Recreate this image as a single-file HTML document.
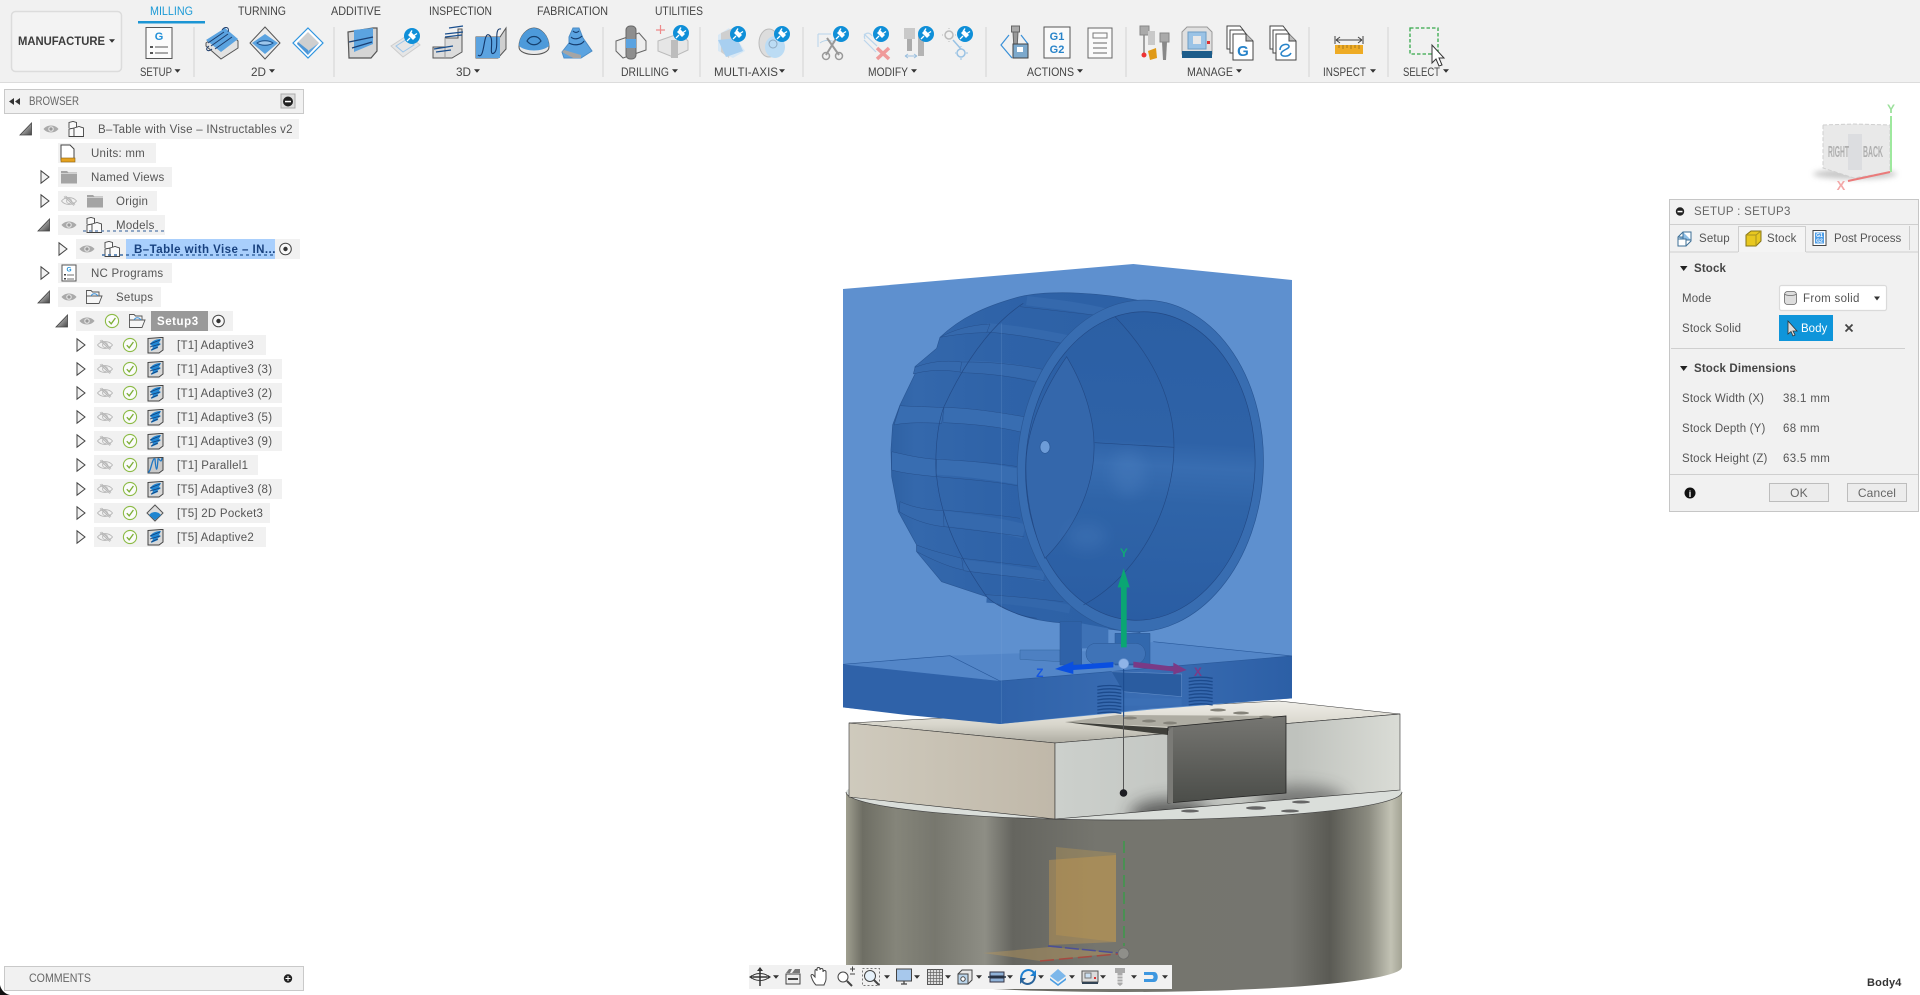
<!DOCTYPE html>
<html lang="en"><head><meta charset="utf-8"><title>Manufacture</title>
<style>
html,body{margin:0;padding:0;background:#fff;width:1920px;height:995px;overflow:hidden}
svg{display:block;position:absolute;left:0;top:0}
text{font-family:"Liberation Sans",sans-serif;font-size:11px;fill:#555;letter-spacing:.35px}
.tab{font-size:11.5px;fill:#444;letter-spacing:0}
.lab{font-size:11.5px;fill:#444;letter-spacing:0}
.tr{font-size:11.5px;fill:#555;letter-spacing:.25px}
.p{font-size:11.5px;fill:#555;letter-spacing:.15px}
.v{font-size:11.5px;fill:#555;letter-spacing:.35px}
.b{font-weight:bold;fill:#444;letter-spacing:.15px}
</style></head><body>
<svg width="1920" height="995" viewBox="0 0 1920 995" xmlns="http://www.w3.org/2000/svg">
<defs>
<linearGradient id="cyl" x1="846" x2="1402" y1="0" y2="0" gradientUnits="userSpaceOnUse">
<stop offset="0" stop-color="#a09f90"/><stop offset=".03" stop-color="#6e6e64"/><stop offset=".09" stop-color="#85857a"/><stop offset=".16" stop-color="#77776e"/><stop offset=".25" stop-color="#8e8e85"/><stop offset=".3" stop-color="#65655f"/><stop offset=".45" stop-color="#75756e"/><stop offset=".8" stop-color="#75756f"/><stop offset=".87" stop-color="#5a5a54"/><stop offset=".94" stop-color="#8b8b80"/><stop offset=".98" stop-color="#c2c2b4"/><stop offset="1" stop-color="#a3a394"/>
</linearGradient>
<linearGradient id="rf" x1="1055" y1="0" x2="1400" y2="0" gradientUnits="userSpaceOnUse"><stop offset="0" stop-color="#ccd0cc"/><stop offset=".35" stop-color="#c4c7c3"/><stop offset=".7" stop-color="#bfc2bd"/><stop offset="1" stop-color="#dadcd6"/></linearGradient>
<linearGradient id="win" x1="0" x2="0" y1="720" y2="805" gradientUnits="userSpaceOnUse"><stop offset="0" stop-color="#747470"/><stop offset="1" stop-color="#4a4c48"/></linearGradient>
<linearGradient id="tan" x1="849" x2="1055" y1="0" y2="0" gradientUnits="userSpaceOnUse"><stop offset="0" stop-color="#cfcabd"/><stop offset="1" stop-color="#c0b8a9"/></linearGradient>
<linearGradient id="topf" x1="0" x2="0" y1="700" y2="745" gradientUnits="userSpaceOnUse"><stop offset="0" stop-color="#f0efe9"/><stop offset=".55" stop-color="#d8d6cc"/><stop offset="1" stop-color="#a9a79d"/></linearGradient>
<linearGradient id="bar" x1="215" x2="800" y1="0" y2="0" gradientUnits="userSpaceOnUse"><stop offset="0" stop-color="#2f62a4"/><stop offset=".12" stop-color="#3468ac"/><stop offset=".5" stop-color="#2f63a8"/><stop offset="1" stop-color="#2d61a6"/></linearGradient>
<linearGradient id="innr" x1="0" x2="0" y1="180" y2="1110" gradientUnits="userSpaceOnUse"><stop offset="0" stop-color="#2b5fa4"/><stop offset=".42" stop-color="#2e62a7"/><stop offset=".5" stop-color="#386db1"/><stop offset=".62" stop-color="#2f64a8"/><stop offset="1" stop-color="#2a5da3"/></linearGradient>
<linearGradient id="bt" x1="540" x2="1416" y1="0" y2="0" gradientUnits="userSpaceOnUse"><stop offset="0" stop-color="#2f62a9"/><stop offset=".5" stop-color="#3a6db3"/><stop offset="1" stop-color="#2c5fa6"/></linearGradient>
<linearGradient id="tl" x1="0" x2="1" y1="0" y2="1"><stop offset="0" stop-color="#eee"/><stop offset="1" stop-color="#444"/></linearGradient>
<clipPath id="rfc"><path d="M1055 743L1400 714V790L1055 819Z"/></clipPath>
<filter id="bl" x="-50%" y="-50%" width="200%" height="200%"><feGaussianBlur stdDeviation="22"/></filter>
<filter id="s1" x="-30%" y="-100%" width="160%" height="300%"><feGaussianBlur stdDeviation="3"/></filter>
<filter id="s2" x="-50%" y="-100%" width="200%" height="300%"><feGaussianBlur stdDeviation="8"/></filter>
<g id="eye"><path d="M-7.500 0C-4-4.600 4-4.600 7.500 0C4 4.600-4 4.600-7.500 0Z" fill="#aaa"/><circle r="2.800" fill="#e2e2e2"/><circle r="1.600" fill="#999"/></g>
<g id="eyeoff" fill="none" stroke="#b5b5b5" stroke-width=".9"><path d="M-7.500 0C-4-4.600 4-4.600 7.500 0C4 4.600-4 4.600-7.500 0Z"/><circle r="2.400"/><path d="M-5-4.500L5 4.500M-3.500-5L6 3.500"/></g>
<g id="chk"><circle r="6.600" fill="#fbfbfb" stroke="#8cbb45" stroke-width="1.100"/><path d="M-3.200 .2L-.8 2.800L3.400-3" fill="none" stroke="#7cae36" stroke-width="1.300"/></g>
<g id="comp" fill="#fafafa" stroke="#444" stroke-width=".9"><path d="M-7-1V-6.500L-3-7.500L.5-6.500V-1"/><path d="M-7 0L-2-1V7.500H-7Z"/><path d="M-2-1L3-2.500L7.500-1V7.500H-2Z"/></g>
<g id="fold"><path d="M-8-6H-2L-.5-4.500H8V6.500H-8Z" fill="#a4a4a4"/><path d="M-8-3.500H8" stroke="#ddd" stroke-width=".8"/></g>
<g id="fo" fill="#f6f6f6" stroke="#555" stroke-width=".9"><path d="M-7.500-6.500H-3L-1.500-5H5V-1H-7.500Z"/><path d="M-7.500 6.500V-1L-5-1H8L5 6.500Z"/><path d="M-3-1C-1.500-4 2-4 4-1" fill="none" stroke="#3a8fd8"/></g>
<g id="op"><path d="M-7-6.500L6-7.500H8V5L4 8H-7Z" fill="#d8d8d8" stroke="#444" stroke-width="1"/><path d="M-5-1C-2-5 2-6 6-6L4-2L6-1L2 2L3 3L-4 6L-2 2Z" fill="#2388d4"/><path d="M-5-1L5-5M-5 2L5-1M-4 5L3 2" stroke="#123f78" stroke-width=".8"/></g>
<g id="tc"><path d="M0-6.200L8 0L0 6.200Z" fill="#f2f2f2" stroke="#444" stroke-width="1"/></g>
<g id="to"><path d="M5.500-6V6H-6Z" fill="url(#tl)" stroke="#444" stroke-width=".8"/></g>
<g id="radio"><circle r="5.800" fill="#f8f8f8" stroke="#444"/><circle r="2.200" fill="#333"/></g>
<g id="plug"><circle r="8" fill="#0f8fd8"/><path d="M-1-4L4 1L1 4L-4-1Z" fill="#fff"/><path d="M-2-2.500L0-5.500M2-.5L5-2.500M-2 2L-5 5" stroke="#fff" stroke-width="1.300"/></g>
<path id="car" d="M-3-1.800H3L0 1.800Z" fill="#333"/>
</defs>
<rect width="1920" height="995" fill="#fff"/>

<!-- cylinder table -->
<path d="M846 792A278 28 0 0 0 1402 792V967A278 25 0 0 1 846 967Z" fill="url(#cyl)"/>
<path d="M846 792A278 28 0 0 0 1402 792A278 22 0 0 0 846 792Z" fill="#dadeda"/>
<path d="M846 792A278 28 0 0 0 1402 792" fill="none" stroke="#444" stroke-width=".7"/>
<g fill="#666"><ellipse cx="1190" cy="811" rx="9" ry="1.500"/><ellipse cx="1256" cy="808" rx="10" ry="1.700"/><ellipse cx="1290" cy="811" rx="9" ry="1.500"/><ellipse cx="1301" cy="802" rx="9" ry="1.500"/></g>
<!-- orange planes -->
<path d="M1056 847L1116 853V942L1056 935Z" fill="#c09a50" opacity=".35"/>
<path d="M1049 860L1116 855V942L1049 945Z" fill="#c39a50" opacity=".45"/>
<path d="M983 953L1050 947L1118 953L1040 961Z" fill="#b8975c" opacity=".45"/>
<path d="M1048 946L1118 953" stroke="#4b4f96" stroke-width="1.500" stroke-dasharray="14 3"/>
<path d="M1040 961L1118 954" stroke="#a64a40" stroke-width="1.500" stroke-dasharray="14 5"/>
<path d="M1124 841V946" stroke="#3d9a4a" stroke-width="1.500" stroke-dasharray="12 5"/>
<circle cx="1123.500" cy="953.500" r="5.500" fill="#8f8f8a" stroke="#666" stroke-width=".6"/>
<!-- vise block -->
<path d="M849 723L1279 701L1400 714L1055 743Z" fill="url(#topf)" stroke="#333" stroke-width=".5"/>
<path d="M849 723L1055 743V819L849 797Z" fill="url(#tan)" stroke="#333" stroke-width=".6"/>
<path d="M1055 743L1400 714V790L1055 819Z" fill="url(#rf)" stroke="#333" stroke-width=".6"/>
<g clip-path="url(#rfc)"><ellipse cx="1170" cy="815" rx="40" ry="16" fill="#333" opacity=".7" filter="url(#s2)"/><ellipse cx="1300" cy="800" rx="45" ry="14" fill="#444" opacity=".6" filter="url(#s2)"/></g>
<path d="M1118 715L1286 716L1172 727L1065 722Z" fill="#aeaca2"/>
<path d="M1065 722L1168 728V735Z" fill="#3f3f3a"/>
<path d="M1168 727L1286 716V793L1168 803Z" fill="url(#win)" stroke="#222" stroke-width=".8"/>
<path d="M1168 731V803H1173L1173 727Z" fill="#7a7a76"/>
<g fill="#85837a"><ellipse cx="1218" cy="710" rx="8" ry="1.500"/><ellipse cx="1241" cy="713" rx="8" ry="1.500"/><ellipse cx="1266" cy="717" rx="7" ry="1.500"/><ellipse cx="1130" cy="718" rx="7" ry="1.500"/><ellipse cx="1149" cy="721" rx="7" ry="1.500"/><ellipse cx="1170" cy="723" rx="7" ry="1.500"/><ellipse cx="1216" cy="719" rx="8" ry="1.500"/></g>
<path d="M1123.500 693V793" stroke="#555" stroke-width="1"/>
<circle cx="1123.500" cy="793" r="3.800" fill="#1d1d22"/>

<!-- blue stock and wheel -->
<g transform="translate(820,250) scale(.33333)">
<path d="M69 117L940 42L1416 90V1345L1000 1378L540 1422L69 1372Z" fill="#5e90cf"/>
<path d="M69 1243L390 1217L900 1200L1000 1175L1416 1218L540 1293Z" fill="#5386c8"/>
<path d="M69 1243L540 1293V1422L250 1394L69 1372Z" fill="#2f62a9"/>
<path d="M540 1293L1416 1218V1345L1000 1375L540 1422Z" fill="url(#bt)"/>
<path d="M69 1243L390 1217L540 1293L1416 1218M1000 1175L1416 1218" fill="none" stroke="#2a5a9c" stroke-width="2"/>
<path d="M600 1200H720V1235L600 1228Z" fill="#4d80c2" stroke="#34659f" stroke-width="1.500"/>
<path d="M875 1265L1085 1272V1340L910 1325" fill="#2a5ca0" stroke="#5d8ac6" stroke-width="2"/>
<rect x="905" y="1345" width="180" height="22" fill="#3b6fb5"/>
<!-- barrel -->
<path d="M960 152C850 130 700 118 600 140C490 170 420 205 360 262L350 295L285 350L285 372L240 465L218 525L213 600L215 680L235 785L290 885L290 905L365 995L500 1040C560 1085 620 1110 720 1118L890 1140L960 1148Z" fill="url(#bar)" stroke="#2a5795" stroke-width="2"/>
<g fill="none" stroke-linecap="butt">
<path d="M500 232C600 240 680 255 760 272" stroke="#3569ad" stroke-width="26"/><path d="M500 246C600 254 680 270 750 286" stroke="#264f8c" stroke-width="1.500"/>
<path d="M420 350C520 350 600 362 670 378" stroke="#3569ad" stroke-width="38"/><path d="M420 336C520 335 600 345 668 358M420 368C520 370 600 384 662 400" stroke="#264f8c" stroke-width="1.500"/>
<path d="M372 495C460 498 550 510 615 525" stroke="#386db1" stroke-width="46"/><path d="M372 472C470 475 550 490 612 500M370 518C460 522 540 530 610 548" stroke="#264f8c" stroke-width="1.500"/>
<path d="M350 650C440 655 530 668 596 680" stroke="#386db1" stroke-width="48"/><path d="M350 628C440 632 530 640 594 650M350 680C440 688 530 695 595 708" stroke="#264f8c" stroke-width="1.500"/>
<path d="M372 805C460 815 540 825 612 845" stroke="#3569ad" stroke-width="44"/><path d="M372 780C460 790 540 795 600 805M372 830C460 840 540 850 612 860" stroke="#264f8c" stroke-width="1.500"/>
<path d="M430 945C520 955 600 965 672 980" stroke="#3569ad" stroke-width="32"/><path d="M425 925C520 935 600 945 650 950M430 962C520 975 600 980 675 992" stroke="#264f8c" stroke-width="1.500"/>
<path d="M500 1045C600 1052 680 1062 750 1078" stroke="#3367ab" stroke-width="26"/><path d="M497 1034C600 1040 680 1050 730 1055" stroke="#264f8c" stroke-width="1.500"/>
<path d="M620 152C700 162 780 170 860 190" stroke="#3569ad" stroke-width="28"/><path d="M600 170L840 197" stroke="#264f8c" stroke-width="1.500"/>
<path d="M285 352C330 335 370 330 425 336L420 366C370 358 320 360 280 372Z" fill="#3569ad" stroke="#264f8c" stroke-width="1.500"/>
<path d="M240 467C280 470 330 470 372 473L365 520C320 518 260 516 222 525Z" fill="#386db1" stroke="#264f8c" stroke-width="1.500"/>
<path d="M215 605C260 615 300 625 350 628L348 680C300 675 250 670 215 660Z" fill="#386db1" stroke="#264f8c" stroke-width="1.500"/>
<path d="M240 755C285 775 330 780 370 782L372 830C320 825 270 805 238 785Z" fill="#3569ad" stroke="#264f8c" stroke-width="1.500"/>
<path d="M290 885C340 905 390 915 425 925L430 960C380 950 330 925 290 905Z" fill="#3468ac" stroke="#264f8c" stroke-width="1.500"/>
<path d="M360 262C400 240 450 225 510 222L500 248C450 248 400 255 360 262Z" fill="#3569ad" stroke="#264f8c" stroke-width="1.500"/>
<path d="M610 160C540 205 450 300 372 470C345 540 345 660 350 680C360 780 400 900 500 1040C530 1070 600 1100 650 1105" stroke="#234a86" stroke-width="2"/>
</g>
<!-- ring -->
<ellipse cx="961" cy="648" rx="369" ry="498" transform="rotate(3 961 648)" fill="#386db1" stroke="#2a5795" stroke-width="2"/>
<ellipse cx="961" cy="648" rx="344" ry="463" transform="rotate(3 961 648)" fill="url(#innr)" stroke="#234a86" stroke-width="2"/>
<path d="M740 320C800 420 825 520 822 600C820 720 760 840 675 925C640 850 615 740 618 640C620 540 670 420 740 320Z" fill="#3467ab" stroke="#234a86" stroke-width="2"/>
<path d="M885 200C1000 320 1062 450 1062 590C1062 780 950 980 790 1065" fill="none" stroke="#234a86" stroke-width="2"/>
<path d="M824 578L1062 592" stroke="#234a86" stroke-width="2"/>
<ellipse cx="925" cy="670" rx="50" ry="70" fill="#5d8fcc" opacity=".22" filter="url(#bl)"/>
<ellipse cx="800" cy="860" rx="60" ry="40" fill="#5d8fcc" opacity=".22" filter="url(#bl)"/>
<ellipse cx="675" cy="591" rx="15" ry="19" fill="#6d9cd8" stroke="#2a5795" stroke-width="2"/>
<path d="M545 220V1420" stroke="#7ba4d8" stroke-width="2" opacity=".3"/>
<!-- pedestal -->
<path d="M720 1115H785V1245H720Z" fill="#2f62a8" stroke="#2a5795" stroke-width="1.500"/>
<path d="M785 1120L865 1135V1195H785Z" fill="#3e72b6"/>
<path d="M885 1150H990V1245H885Z" fill="#3268ad" stroke="#2a5795" stroke-width="1.500"/>
<rect x="798" y="1180" width="178" height="62" rx="30" fill="#3f73b7" stroke="#2a5795" stroke-width="1.500"/>
<!-- springs -->
<g fill="none" stroke="#1c4a8c" stroke-width="4"><path d="M832 1310q36-7 72 0M832 1320q36-7 72 0M832 1330q36-7 72 0M832 1340q36-7 72 0M832 1350q36-7 72 0M832 1360q36-7 72 0M832 1370q36-7 72 0M832 1380q36-7 72 0M832 1390q36-7 72 0"/><path d="M1106 1285q36-7 72 0M1106 1295q36-7 72 0M1106 1305q36-7 72 0M1106 1315q36-7 72 0M1106 1325q36-7 72 0M1106 1335q36-7 72 0M1106 1345q36-7 72 0M1106 1355q36-7 72 0M1106 1365q36-7 72 0"/></g>
<path d="M911 1250V1400" stroke="#1b4a8c" stroke-width="3"/>
<!-- gizmo -->
<path d="M903 1192V1012H893L911 955L929 1012H920V1192Z" fill="#0aa673"/>
<path d="M880 1236L760 1245V1234L705 1257L760 1272V1260L880 1252Z" fill="#0a4fe0"/>
<path d="M940 1235L1060 1250V1238L1100 1260L1060 1274V1264L940 1252Z" fill="#7a3a86"/>
<circle cx="911" cy="1241" r="15" fill="#8fb4e8" stroke="#6d97d2" stroke-width="2"/>
</g>
<text x="1124" y="557" style="font-size:12px;fill:#11a678;font-weight:bold" text-anchor="middle">Y</text>
<text x="1040" y="677" style="font-size:12px;fill:#1556e0;font-weight:bold" text-anchor="middle">Z</text>
<text x="1198" y="676" style="font-size:12px;fill:#7d3a87;font-weight:bold" text-anchor="middle">X</text>

<!-- viewcube -->
<ellipse cx="1855" cy="174" rx="42" ry="5" fill="#999" opacity=".55" filter="url(#s1)"/>
<path d="M1823 125L1854 124L1890 125V172L1854 178L1823 168Z" fill="#e9e9e9" stroke="#cfcfcf" stroke-dasharray="4 2"/>
<path d="M1848 134H1862V170H1848Z" fill="#dcdde0"/>
<text x="1828" y="157" textLength="21" lengthAdjust="spacingAndGlyphs" style="font-size:16px;fill:#aeaeae;font-weight:bold;letter-spacing:0">RIGHT</text>
<text x="1863" y="157" textLength="20" lengthAdjust="spacingAndGlyphs" style="font-size:16px;fill:#aeaeae;font-weight:bold;letter-spacing:0">BACK</text>
<path d="M1891 116V172" stroke="#9ee89e" stroke-width="2"/>
<path d="M1848 181L1890 172" stroke="#ea7a7a" stroke-width="2"/>
<text x="1891" y="113" style="font-size:12px;fill:#9be09b;font-weight:bold;letter-spacing:0" text-anchor="middle">Y</text>
<text x="1841" y="190" style="font-size:13px;fill:#f3a8a8;font-weight:bold;letter-spacing:0" text-anchor="middle">X</text>

<!-- ribbon -->
<rect width="1920" height="82" fill="#f1f1f1"/>
<path d="M0 82.500H1920" stroke="#dcdcdc"/>
<rect x="11.500" y="11.500" width="110" height="60" rx="4" fill="#f3f3f3" stroke="#dcdcdc" stroke-width="1.500"/>
<text x="18" y="45" textLength="87" lengthAdjust="spacingAndGlyphs" style="font-size:11.500px;font-weight:bold;fill:#3c3c3c;letter-spacing:0">MANUFACTURE</text><use href="#car" x="112" y="41"/>
<rect x="138" y="21" width="67" height="2.500" fill="#1b95d4"/>
<text x="150" y="15" class="tab" textLength="43" lengthAdjust="spacingAndGlyphs" style="fill:#1c9ad6">MILLING</text>
<text x="238" y="15" class="tab" textLength="48" lengthAdjust="spacingAndGlyphs">TURNING</text><text x="331" y="15" class="tab" textLength="50" lengthAdjust="spacingAndGlyphs">ADDITIVE</text><text x="429" y="15" class="tab" textLength="63" lengthAdjust="spacingAndGlyphs">INSPECTION</text><text x="537" y="15" class="tab" textLength="71" lengthAdjust="spacingAndGlyphs">FABRICATION</text><text x="655" y="15" class="tab" textLength="48" lengthAdjust="spacingAndGlyphs">UTILITIES</text>
<g stroke="#dedede" stroke-width="1.500"><path d="M194 27V77M334 27V77M603 27V77M700 27V77M803 27V77M986 27V77M1126 27V77M1309 27V77M1388 27V77"/></g>
<text x="140" y="76" class="lab" textLength="32" lengthAdjust="spacingAndGlyphs">SETUP</text><use href="#car" x="177.500" y="71"/>
<text x="251" y="76" class="lab" textLength="15" lengthAdjust="spacingAndGlyphs">2D</text><use href="#car" x="272" y="71"/>
<text x="456" y="76" class="lab" textLength="15" lengthAdjust="spacingAndGlyphs">3D</text><use href="#car" x="477" y="71"/>
<text x="621" y="76" class="lab" textLength="48" lengthAdjust="spacingAndGlyphs">DRILLING</text><use href="#car" x="675" y="71"/>
<text x="714" y="76" class="lab" textLength="64" lengthAdjust="spacingAndGlyphs">MULTI-AXIS</text><use href="#car" x="782" y="71"/>
<text x="868" y="76" class="lab" textLength="40" lengthAdjust="spacingAndGlyphs">MODIFY</text><use href="#car" x="914" y="71"/>
<text x="1027" y="76" class="lab" textLength="47" lengthAdjust="spacingAndGlyphs">ACTIONS</text><use href="#car" x="1080" y="71"/>
<text x="1187" y="76" class="lab" textLength="46" lengthAdjust="spacingAndGlyphs">MANAGE</text><use href="#car" x="1239" y="71"/>
<text x="1323" y="76" class="lab" textLength="43" lengthAdjust="spacingAndGlyphs">INSPECT</text><use href="#car" x="1373" y="71"/>
<text x="1403" y="76" class="lab" textLength="37" lengthAdjust="spacingAndGlyphs">SELECT</text><use href="#car" x="1446" y="71"/>

<!-- ribbon icons -->
<g transform="translate(159,43)"><rect x="-13" y="-15.500" width="26" height="31" fill="#fbfbfb" stroke="#555"/><text x="0" y="-3" text-anchor="middle" style="font-size:11px;font-weight:bold;fill:#1f8fd8;letter-spacing:0">G</text><path d="M-9 3h3v2h-3zM-9 9h3v2h-3z" fill="#555"/><path d="M-4 4H9M-4 10H9" stroke="#555"/></g>
<g transform="translate(222,43)"><path d="M-16 0L3-14L16-2V5L-1 16L-16 3Z" fill="#e2e2e2" stroke="#555"/><path d="M-16-3L3-15L16-4L-1 9Z" fill="#5ba3e0"/><path d="M-14 0L2-11M-11 3L6-9M-7 6L10-6M-13 3C-18 6-14 10-10 6M0-13C3-17 8-16 6-11" fill="none" stroke="#1d3c6a"/></g>
<g transform="translate(265,43)"><path d="M0-16L15 0L0 16L-15 0Z" fill="#ececec" stroke="#555"/><path d="M0-9L13 0L0 11L-13 0Z" fill="#5ba3e0"/><path d="M-8 0C-4-3 4-3 8 0C4 3-4 3-8 0Z" fill="#9cc6ec" stroke="#174b85"/></g>
<g transform="translate(308,43)"><path d="M0-15L15 0L0 15L-15 0Z" fill="#fff" stroke="#2f95e0" stroke-width="1.200"/><path d="M-11 0L0 9L11 0L0-11Z" fill="#cfcfcf"/><path d="M-11 0L0 8L11 0L0 12Z" fill="#5ba3e0"/><path d="M-10-1L0 7V12L-11 1Z" fill="#4d96d6"/></g>
<g transform="translate(362,43)"><path d="M-14-11L11-15H15V8L9 15H-13Z" fill="#d5d5d5" stroke="#555" stroke-width="1.200"/><path d="M-8-13L11-15V1L-8 9Z" fill="#5ba3e0"/><path d="M-13-1L11-6M-10 5L10-1" stroke="#1a3f73" stroke-width="1.200"/></g>
<g transform="translate(405,43)"><path d="M-14 3L3-8L15 2L-2 14Z" fill="#e6e6e6" stroke="#ccc"/><path d="M-9 3L2-4L9 2L-2 9Z" fill="none" stroke="#9dc6ea"/><use href="#plug" x="7" y="-7"/></g>
<g transform="translate(448,43)"><path d="M-15 4H-3V-5H10V-14H14V9L4 15H-15Z" fill="#dcdcdc" stroke="#555"/><path d="M-3-5V15" stroke="#999"/><path d="M-14 6L5 3M-12 9L3 7M-3-6L14-8M-3-9L15-11M1-15L15-17" stroke="#1a4f8e" stroke-width="1.300"/></g>
<g transform="translate(491,43)"><path d="M-15-6H9L15-15V6L7 15H-15Z" fill="#cfcfcf" stroke="#555"/><path d="M-15-6H9V15H-15Z" fill="#5ba3e0"/><path d="M-13 12C-6 18-8-12-2-8C4-5-3 14 3 10C9 6 2-16 10-14" fill="none" stroke="#14386a" stroke-width="1.100"/></g>
<g transform="translate(534,43)"><path d="M-15 4C-15-8-6-15 0-15C6-15 15-8 15 4C15 14-15 14-15 4Z" fill="#e9e9e9" stroke="#555"/><path d="M-15 3C-15-8-6-15 0-15C6-15 15-8 15 3C8 9-8 9-15 3Z" fill="#4d9ada"/><path d="M-7-2C-4-8 4-8 7-2C3 3-3 3-7-2Z" fill="none" stroke="#16406e" stroke-width="1.200"/></g>
<g transform="translate(577,43)"><path d="M-15 9L-8 0V-6L-4-15H2L6-5L15 8L4 15L-13 15Z" fill="#5ba3e0" stroke="#4a8cc6"/><path d="M-8 0C-3 3 5 2 7-2M-6-6C-3-3 2-4 5-7M-4-12C-2-10 0-10 2-12" fill="none" stroke="#163d6e" stroke-width="1.200"/><path d="M-15 9L-4 15H4V12L-13 7Z" fill="#a5a5a5"/></g>
<g transform="translate(631,43)"><path d="M-15-2L8-10L15-2V7L-8 15L-15 8Z" fill="#eee" stroke="#666"/><rect x="-5" y="-17" width="10" height="33" rx="4" fill="#8e8e8e" stroke="#666"/><rect x="-5" y="-4" width="10" height="9" fill="#5ba3e0"/></g>
<g transform="translate(673,43)"><path d="M-15-2L8-10L15-2V7L0 14L-15 8Z" fill="#e6e6e6" stroke="#bbb"/><rect x="-2" y="-3" width="7" height="18" fill="#bdbdbd"/><path d="M-17-13h9M-12.500-18v9" stroke="#ee8a8a" stroke-width="1.200"/><use href="#plug" x="8" y="-10"/></g>
<g transform="translate(731,43)"><path d="M-13-8L-2-15L3-8L14 8L2 15L-13 8Z" fill="#d8e8f5"/><path d="M-10-10L2-15L-2 15L-10 9Z" fill="#cfcfcf"/><path d="M-13-3L6-5L12 8L-5 14Z" fill="#a8cff0"/><use href="#plug" x="7" y="-9"/></g>
<g transform="translate(774,43)"><ellipse cx="-5" cy="0" rx="10" ry="14" fill="#ddd" stroke="#bbb"/><ellipse cx="1" cy="4" rx="10" ry="11" fill="#bcdcf4"/><circle cx="-1" cy="1" r="4" fill="none" stroke="#8fa9c0"/><use href="#plug" x="8" y="-9"/></g>
<g transform="translate(833,43)"><path d="M-15-9H-2M-15-9V4M-13 0C-8-4 0-3 2 0" fill="none" stroke="#b8d4ea"/><path d="M-6-5L6 12M4-6L-7 12" stroke="#999" stroke-width="2"/><circle cx="-7" cy="13" r="3.500" fill="none" stroke="#999" stroke-width="1.500"/><circle cx="6" cy="13" r="3.500" fill="none" stroke="#999" stroke-width="1.500"/><use href="#plug" x="8" y="-9"/></g>
<g transform="translate(878,43)"><path d="M-14-3L-2 9M-14-9L-1 3M-13-4C-16-10-8-12-6-7" fill="none" stroke="#bcd6ec" stroke-width="1.200"/><path d="M-1 5L11 16M11 5L-1 16" stroke="#ef9a9a" stroke-width="3.500"/><use href="#plug" x="3" y="-9"/></g>
<g transform="translate(918,43)"><rect x="-14" y="-15" width="11" height="11" fill="#c9c9c9"/><rect x="-11" y="-4" width="5" height="12" fill="#ababab"/><rect x="0" y="-8" width="6" height="21" fill="#b4b4b4"/><path d="M-13 13H-1M-13 13l3-2M-13 13l3 2M-1 13l-3-2M-1 13l-3 2" stroke="#9cc0de" fill="none"/><use href="#plug" x="8" y="-9"/></g>
<g transform="translate(959,43)"><circle cx="-10" cy="-8" r="4" fill="none" stroke="#bbb" stroke-width="1.500"/><path d="M-16-8h-1M-4-8h1M-10-14v-1M-10-2v1" stroke="#bbb"/><path d="M-6-3L2 6" stroke="#99c2e4" stroke-width="1.500"/><circle cx="2" cy="10" r="4" fill="none" stroke="#99c2e4" stroke-width="1.500"/><path d="M-4 10h1M7 10h2M2 4V3M2 15v2" stroke="#99c2e4"/><use href="#plug" x="6" y="-9"/></g>
<g transform="translate(1015,43)"><path d="M-6-8L-14 2L-3 15M6-8L13 1" fill="none" stroke="#3a90d8" stroke-width="1.200"/><rect x="-3.500" y="-17" width="8" height="6" fill="#aaa" stroke="#666"/><path d="M-2-11H3L2 6H-1Z" fill="#999" stroke="#666"/><rect x="-2" y="1" width="15" height="14" fill="#7da9cc" stroke="#444"/><rect x="2" y="4" width="6" height="5" fill="#fff"/></g>
<g transform="translate(1057,43)"><rect x="-13" y="-16" width="26" height="31" fill="#fafafa" stroke="#555"/><text x="0" y="-3" text-anchor="middle" style="font-size:11px;font-weight:bold;fill:#2783c9;letter-spacing:0">G1</text><text x="0" y="10" text-anchor="middle" style="font-size:11px;font-weight:bold;fill:#2783c9;letter-spacing:0">G2</text></g>
<g transform="translate(1100,43)"><rect x="-12" y="-15" width="24" height="30" fill="#fafafa" stroke="#666"/><rect x="-7" y="-10" width="14" height="5" fill="none" stroke="#777"/><path d="M-7 0H7M-7 5H7M-7 10H7" stroke="#666"/></g>
<g transform="translate(1153,43)"><rect x="-13" y="-17" width="9" height="9" fill="#aaa" stroke="#888"/><path d="M-9-8V11" stroke="#888" stroke-width="1.500"/><circle cx="-9" cy="12" r="2.500" fill="#e33"/><rect x="-5" y="-12" width="7" height="14" fill="#c9c9c9"/><path d="M-5 8L3 5L4 15L-3 17Z" fill="#e09a18"/><rect x="7" y="-10" width="9" height="9" fill="#aaa" stroke="#888"/><path d="M9-1H14L13 17H10Z" fill="#888"/></g>
<g transform="translate(1197,43)"><path d="M-15-11L-10-16H10L15-11V11H-15Z" fill="#e0e0e0" stroke="#999"/><rect x="-9" y="-11" width="18" height="17" fill="#9ac3e6" stroke="#6d9cc4"/><rect x="-4" y="-7" width="8" height="8" fill="#e8e8e8"/><rect x="-15" y="8" width="30" height="7" fill="#1c5c8a"/><rect x="10" y="-2" width="3" height="3" fill="#d33"/></g>
<g transform="translate(1240,43)"><path d="M-13-17H0L4-12V6H-13Z" fill="#fff" stroke="#444"/><path d="M-10-13H3L7-8V10H-10Z" fill="#fff" stroke="#444"/><path d="M-7-9H6L13-2V17H-7Z" fill="#fff" stroke="#444"/><path d="M6-9V-2H13" fill="#bbb" stroke="#444"/><text x="3" y="13" text-anchor="middle" style="font-size:15px;font-weight:bold;fill:#2783c9;letter-spacing:0">G</text></g>
<g transform="translate(1283,43)"><path d="M-13-17H0L4-12V6H-13Z" fill="#fff" stroke="#444"/><path d="M-10-13H3L7-8V10H-10Z" fill="#fff" stroke="#444"/><path d="M-7-9H6L13-2V17H-7Z" fill="#fff" stroke="#444"/><path d="M6-9V-2H13" fill="#bbb" stroke="#444"/><path d="M-3 7C-3 1 5 0 6 3C7 6-2 7-2 11C-1 14 6 14 8 10" fill="none" stroke="#2783c9" stroke-width="1.500"/></g>
<g transform="translate(1349,43)"><rect x="-14" y="2" width="28" height="9" fill="#eeab24"/><path d="M-10 2v3M-6 2v4M-2 2v3M2 2v4M6 2v3M10 2v4" stroke="#a8781a"/><path d="M-14-7V1M14-7V1M-13-3H13M-13-3l4-3M-13-3l4 3M13-3l-4-3M13-3l-4 3" fill="none" stroke="#444"/></g>
<g transform="translate(1424,41)"><rect x="-14" y="-13" width="28" height="26" fill="none" stroke="#35a84a" stroke-width="1.300" stroke-dasharray="3.500 2"/><path d="M8 4L8 22L12 18L15 25L18 24L15 17L20 17Z" fill="#fff" stroke="#333"/></g>

<!-- browser -->
<rect x="4.500" y="89.500" width="299" height="24" fill="#f1f1f1" stroke="#c9c9c9"/>
<path d="M9 101.500L14 98V105ZM15 101.500L20 98V105Z" fill="#333"/>
<text x="29" y="105" textLength="50" lengthAdjust="spacingAndGlyphs" style="font-size:11.500px;fill:#666;letter-spacing:0">BROWSER</text>
<rect x="281" y="94" width="14" height="14" fill="#ddd" stroke="#aaa"/><circle cx="288" cy="101.500" r="5" fill="#222"/><rect x="285" y="100.800" width="6" height="1.500" fill="#fff"/>
<g fill="#f1f1f1">
<rect x="40" y="119" width="259" height="20"/><rect x="58" y="143" width="98" height="20"/><rect x="58" y="167" width="114" height="20"/><rect x="58" y="191" width="99" height="20"/><rect x="58" y="215" width="107" height="20"/><rect x="76" y="239" width="224" height="20"/><rect x="58" y="263" width="114" height="20"/><rect x="58" y="287" width="103" height="20"/><rect x="76" y="311" width="157" height="20"/>
<rect x="94" y="335" width="172" height="20"/><rect x="94" y="359" width="188" height="20"/><rect x="94" y="383" width="188" height="20"/><rect x="94" y="407" width="188" height="20"/><rect x="94" y="431" width="188" height="20"/><rect x="94" y="455" width="164" height="20"/><rect x="94" y="479" width="188" height="20"/><rect x="94" y="503" width="176" height="20"/><rect x="94" y="527" width="172" height="20"/>
</g>
<rect x="126" y="239" width="149" height="20" fill="#a9cffc"/>
<rect x="151" y="311" width="57" height="20" fill="#999"/>
<use href="#to" x="26" y="129"/><use href="#eye" x="51" y="129"/><use href="#comp" x="76" y="129"/>
<g transform="translate(68,153)"><path d="M-7-8H2L6-4V7H-7Z" fill="#fff" stroke="#444"/><rect x="-7" y="5" width="14" height="4" fill="#e5a21f" stroke="#8a5f10" stroke-width=".6"/></g>
<use href="#tc" x="41" y="177"/><use href="#fold" x="69" y="177"/>
<use href="#tc" x="41" y="201"/><use href="#eyeoff" x="69" y="201"/><use href="#fold" x="95" y="201"/>
<use href="#to" x="44" y="225"/><use href="#eye" x="69" y="225"/><use href="#comp" x="94" y="225"/>
<use href="#tc" x="59" y="249"/><use href="#eye" x="87" y="249"/><use href="#comp" x="112" y="249"/><use href="#radio" x="285.500" y="249"/>
<use href="#tc" x="41" y="273"/><g transform="translate(69,273)"><rect x="-7" y="-8" width="14" height="16" fill="#fff" stroke="#555"/><path d="M-5 1h2v1.500h-2zM-5 5h2v1.500h-2z" fill="#444"/><path d="M-2 2H5M-2 6H5" stroke="#444" stroke-width=".8"/><text x="0" y="-1.500" text-anchor="middle" style="font-size:6.500px;font-weight:bold;fill:#1f8fd8;letter-spacing:0">G</text></g>
<use href="#to" x="44" y="297"/><use href="#eye" x="69" y="297"/><use href="#fo" x="94" y="297"/>
<use href="#to" x="62" y="321"/><use href="#eye" x="87" y="321"/><use href="#chk" x="112" y="321"/><use href="#fo" x="137" y="321"/><use href="#radio" x="218.500" y="321"/>
<path d="M83 231h82" stroke="#6f8db5" stroke-width="1.500" stroke-dasharray="3 3"/>
<path d="M102 255h172" stroke="#3a6ca5" stroke-width="1.500" stroke-dasharray="3 3"/>
<g>
<use href="#tc" x="77" y="345"/><use href="#eyeoff" x="105" y="345"/><use href="#chk" x="130" y="345"/><use href="#op" x="155" y="345"/>
<use href="#tc" x="77" y="369"/><use href="#eyeoff" x="105" y="369"/><use href="#chk" x="130" y="369"/><use href="#op" x="155" y="369"/>
<use href="#tc" x="77" y="393"/><use href="#eyeoff" x="105" y="393"/><use href="#chk" x="130" y="393"/><use href="#op" x="155" y="393"/>
<use href="#tc" x="77" y="417"/><use href="#eyeoff" x="105" y="417"/><use href="#chk" x="130" y="417"/><use href="#op" x="155" y="417"/>
<use href="#tc" x="77" y="441"/><use href="#eyeoff" x="105" y="441"/><use href="#chk" x="130" y="441"/><use href="#op" x="155" y="441"/>
<use href="#tc" x="77" y="465"/><use href="#eyeoff" x="105" y="465"/><use href="#chk" x="130" y="465"/>
<g transform="translate(155,465)"><path d="M-7-7L6-7.500H8V5L4 8H-7Z" fill="#c9c9c9" stroke="#444"/><path d="M-7 7C-4 8-3-8 0-6C1 7 2 8 3-6C4-8 6 0 7-7" fill="none" stroke="#1f77c4" stroke-width="1.300"/></g>
<use href="#tc" x="77" y="489"/><use href="#eyeoff" x="105" y="489"/><use href="#chk" x="130" y="489"/><use href="#op" x="155" y="489"/>
<use href="#tc" x="77" y="513"/><use href="#eyeoff" x="105" y="513"/><use href="#chk" x="130" y="513"/>
<g transform="translate(155,513)"><path d="M0-8L8 0L0 8L-8 0Z" fill="#dcdcdc" stroke="#555"/><path d="M-6 2C-3-2 3-2 6 2L0 7Z" fill="#1f85d0"/></g>
<use href="#tc" x="77" y="537"/><use href="#eyeoff" x="105" y="537"/><use href="#chk" x="130" y="537"/><use href="#op" x="155" y="537"/>
</g>
<text x="98" y="133" class="tr">B–Table with Vise – INstructables v2</text>
<text x="91" y="157" class="tr">Units: mm</text>
<text x="91" y="181" class="tr">Named Views</text>
<text x="116" y="205" class="tr">Origin</text>
<text x="116" y="229" class="tr">Models</text>
<text x="134" y="253" class="tr" style="font-weight:bold;fill:#17407e;letter-spacing:.45px">B–Table with Vise – IN...</text>
<text x="91" y="277" class="tr">NC Programs</text>
<text x="116" y="301" class="tr">Setups</text>
<text x="157" y="325" class="tr" style="font-weight:bold;fill:#fff;letter-spacing:.55px">Setup3</text>
<text x="177" y="349" class="tr">[T1] Adaptive3</text>
<text x="177" y="373" class="tr">[T1] Adaptive3 (3)</text>
<text x="177" y="397" class="tr">[T1] Adaptive3 (2)</text>
<text x="177" y="421" class="tr">[T1] Adaptive3 (5)</text>
<text x="177" y="445" class="tr">[T1] Adaptive3 (9)</text>
<text x="177" y="469" class="tr">[T1] Parallel1</text>
<text x="177" y="493" class="tr">[T5] Adaptive3 (8)</text>
<text x="177" y="517" class="tr">[T5] 2D Pocket3</text>
<text x="177" y="541" class="tr">[T5] Adaptive2</text>

<!-- comments -->
<rect x="4.500" y="966.500" width="299" height="24" fill="#f1f1f1" stroke="#c9c9c9"/>
<text x="29" y="982" textLength="62" lengthAdjust="spacingAndGlyphs" style="font-size:11.500px;fill:#666;letter-spacing:0">COMMENTS</text>
<circle cx="288" cy="978.500" r="4.200" fill="#222"/><path d="M285.500 978.500h5M288 976v5" stroke="#fff"/>
<path d="M0 985C1 990 5 994 10 995H0Z" fill="#111"/>

<!-- panel -->
<rect x="1669.500" y="199.500" width="249" height="312" fill="#f1f1f1" stroke="#c6c6c6"/>
<path d="M1670 224.500H1918M1670 252H1738M1806 252H1918M1670 474.500H1918" stroke="#cfcfcf"/>
<circle cx="1680" cy="211.500" r="4.200" fill="#222"/><rect x="1677.500" y="210.800" width="5" height="1.500" fill="#fff"/>
<text x="1694" y="215" class="v" style="fill:#666;letter-spacing:.3px">SETUP : SETUP3</text>
<path d="M1738.500 252V226.500H1805.500V252" fill="#f4f4f4" stroke="#cfcfcf"/>
<path d="M1909.500 226V250" stroke="#ccc"/>
<g transform="translate(1684,238)"><path d="M-6-1L-1-6H7V3L2 8H-6Z" fill="#fff" stroke="#3d6f96"/><path d="M-1-6V2H7M-6-1H-1V2" fill="#8fbfe6" stroke="#3d6f96"/><path d="M-6 1H2V8H-6Z" fill="#fff" stroke="#3d6f96"/></g>
<g transform="translate(1753,238)"><path d="M-7-3L-2-7H8V3L3 8H-7Z" fill="#e8c820" stroke="#857418"/><path d="M-7-3H3V8M3-3L8-7" fill="none" stroke="#a99220"/></g>
<g transform="translate(1819.500,238)"><rect x="-6.500" y="-7.500" width="13" height="15" fill="#fff" stroke="#444"/><rect x="-4.500" y="-5.500" width="9" height="11" fill="#4e9de6"/><text x="0" y="-.8" text-anchor="middle" style="font-size:5px;font-weight:bold;fill:#fff;letter-spacing:0">G1</text><text x="0" y="4.600" text-anchor="middle" style="font-size:5px;font-weight:bold;fill:#fff;letter-spacing:0">G2</text></g>
<text x="1699" y="242" class="p">Setup</text><text x="1767" y="242" class="p">Stock</text><text x="1834" y="242" class="p" style="letter-spacing:-.05px">Post Process</text>
<path d="M1680 266H1687.500L1683.700 271Z" fill="#222"/><text x="1694" y="272" class="p b">Stock</text>
<text x="1682" y="302" class="p">Mode</text>
<rect x="1779.500" y="285.500" width="107" height="25" rx="2" fill="#fff" stroke="#dadada" stroke-width="1.200"/>
<g transform="translate(1790.500,298)"><rect x="-6" y="-6.500" width="12" height="13" rx="3" fill="#ddd" stroke="#666" stroke-width=".8"/><path d="M-6-4C-4-2 4-2 6-4" fill="none" stroke="#666" stroke-width=".8"/></g>
<text x="1803" y="302" class="v" style="letter-spacing:.3px">From solid</text><path d="M1874 296.500H1880L1877 300.500Z" fill="#333"/>
<text x="1682" y="332" class="p">Stock Solid</text>
<rect x="1779" y="315" width="54" height="26" fill="#0f95da"/>
<path d="M1788 321V334L1791 331.500L1793 336L1795 335L1793 331H1797Z" fill="#ddd" stroke="#333" stroke-width=".8"/>
<text x="1801" y="332" class="p" style="fill:#fff;letter-spacing:0">Body</text>
<path d="M1845.500 324.500L1852.500 331.500M1852.500 324.500L1845.500 331.500" stroke="#444" stroke-width="1.800"/>
<path d="M1671 348.500H1905" stroke="#cfcfcf"/>
<path d="M1680 366H1687.500L1683.700 371Z" fill="#222"/><text x="1694" y="372" class="p b">Stock Dimensions</text>
<text x="1682" y="402" class="p">Stock Width (X)</text><text x="1783" y="402" class="v">38.1 mm</text>
<text x="1682" y="432" class="p">Stock Depth (Y)</text><text x="1783" y="432" class="v">68 mm</text>
<text x="1682" y="462" class="p">Stock Height (Z)</text><text x="1783" y="462" class="v">63.5 mm</text>
<circle cx="1690" cy="493" r="5.500" fill="#111"/><text x="1690" y="497" text-anchor="middle" style="font-size:9px;font-weight:bold;fill:#fff;letter-spacing:0">i</text>
<rect x="1769.500" y="483.500" width="59" height="18" fill="#ececec" stroke="#bdbdbd"/><text x="1799" y="497" class="p" text-anchor="middle" style="font-size:12px;fill:#666">OK</text>
<rect x="1847.500" y="483.500" width="59" height="18" fill="#ececec" stroke="#bdbdbd"/><text x="1877" y="497" class="p" text-anchor="middle" style="font-size:12px;fill:#666">Cancel</text>

<text x="1867" y="986" style="font-size:11px;font-weight:bold;fill:#333;letter-spacing:.2px">Body4</text>

<!-- bottom toolbar -->
<rect x="749" y="965" width="423" height="24" fill="#f1f1f1"/>
<g transform="translate(760,977)"><path d="M0-9V9M-7 0H7" stroke="#333" stroke-width="1.500"/><path d="M-3-6L0-10L3-6ZM-8-2V2L-11 0ZM8-2V2L11 0Z" fill="#333"/><ellipse cx="0" cy="0" rx="8" ry="3.500" fill="none" stroke="#333"/></g>
<g transform="translate(793,977)"><rect x="-7" y="-3" width="14" height="10" fill="#eee" stroke="#444"/><path d="M-5 2H5" stroke="#444" stroke-width="2"/><path d="M-7-4L-4-8H-1L-3-4ZM-1-4L2-8H7V-4Z" fill="#777"/></g>
<g transform="translate(819,977)" fill="none" stroke="#444"><path d="M-3 8C-7 4-7 1-8-1C-8-3-6-3-5-1L-4 0V-6C-4-8-2-8-2-6V-8C-2-10 1-10 1-8V-7C1-9 4-9 4-7V-5C4-7 7-7 7-5V2C7 5 5 7 5 8Z" fill="#fff"/></g>
<g transform="translate(845,977)" fill="none" stroke="#444"><circle cx="-2" cy="0" r="5" fill="#fff"/><path d="M2 4L7 9" stroke-width="2"/><path d="M5-8h5M7.500-10.500v5M5-3h5"/></g>
<g transform="translate(871,977)" fill="none"><rect x="-8.500" y="-8.500" width="17" height="17" stroke="#777" stroke-dasharray="2 2"/><circle cx="-1" cy="-1" r="5.500" fill="#e6f1fa" stroke="#444"/><path d="M3 3L8 8" stroke="#444" stroke-width="2"/></g>
<g transform="translate(904,977)"><rect x="-7.500" y="-8" width="15" height="12" fill="#a7c8ec" stroke="#444"/><path d="M-3 7H3M0 4V7" stroke="#444" stroke-width="1.300"/></g>
<g transform="translate(935,977)"><rect x="-7.500" y="-7.500" width="15" height="15" fill="#ddd" stroke="#555"/><path d="M-4.500-7.500V7.500M-1.500-7.500V7.500M1.500-7.500V7.500M4.500-7.500V7.500M-7.500-4.500H7.500M-7.500-1.500H7.500M-7.500 1.500H7.500M-7.500 4.500H7.500" stroke="#666" stroke-width=".7"/></g>
<g transform="translate(965,977)"><path d="M-7-3L-3-7H7V3L3 7H-7Z" fill="#e8e8e8" stroke="#444"/><rect x="-7" y="-3" width="10" height="10" fill="#bcd6ec" stroke="#444"/><circle cx="-2" cy="2" r="2.200" fill="#fff" stroke="#444"/></g>
<g transform="translate(997,977)"><path d="M-7-5H7V-1H-7ZM-7 1H7V5H-7Z" fill="#8fb2d8" stroke="#334"/><path d="M-9 0H9" stroke="#234" stroke-width="1.500"/></g>
<g transform="translate(1028,977)" fill="none"><path d="M-7 2C-7-8 3-9 6-4" stroke="#1f80d0" stroke-width="2"/><path d="M7 -2C7 8-3 9-6 4" stroke="#29639a" stroke-width="2"/><path d="M8-7V-1H2Z" fill="#1f80d0"/><path d="M-8 7V1H-2Z" fill="#29639a"/></g>
<g transform="translate(1058,977)"><path d="M0-8L8-1L0 5L-8-1Z" fill="#7cb7ea"/><path d="M-8 1L0 7L8 1V3L0 9L-8 3Z" fill="#4a9ce2"/></g>
<g transform="translate(1090,977)"><rect x="-8" y="-6" width="16" height="11" fill="#dcdcdc" stroke="#555"/><rect x="-5" y="-4" width="6" height="5" fill="#cce0f3" stroke="#777"/><rect x="4" y="0" width="2" height="2" fill="#d33"/><rect x="-8" y="5" width="16" height="2" fill="#345"/></g>
<g transform="translate(1120,977)"><rect x="-5" y="-9" width="10" height="5" fill="#aaa"/><path d="M-2.500-4H2.500V7L0 9L-2.500 7Z" fill="#aaa"/><path d="M-2.500-1H2.500M-2.500 2H2.500M-2.500 5H2.500" stroke="#f1f1f1"/></g>
<g transform="translate(1151,977)"><path d="M-7-5H3C8-5 8 5 3 5H-7V2H1C3 2 3-2 1-2H-7Z" fill="#3d97e0"/></g>
<g><use href="#car" x="776" y="977"/><use href="#car" x="887" y="977"/><use href="#car" x="917" y="977"/><use href="#car" x="948" y="977"/><use href="#car" x="979" y="977"/><use href="#car" x="1010" y="977"/><use href="#car" x="1041" y="977"/><use href="#car" x="1072" y="977"/><use href="#car" x="1103" y="977"/><use href="#car" x="1134" y="977"/><use href="#car" x="1165" y="977"/></g>
</svg>
</body></html>
